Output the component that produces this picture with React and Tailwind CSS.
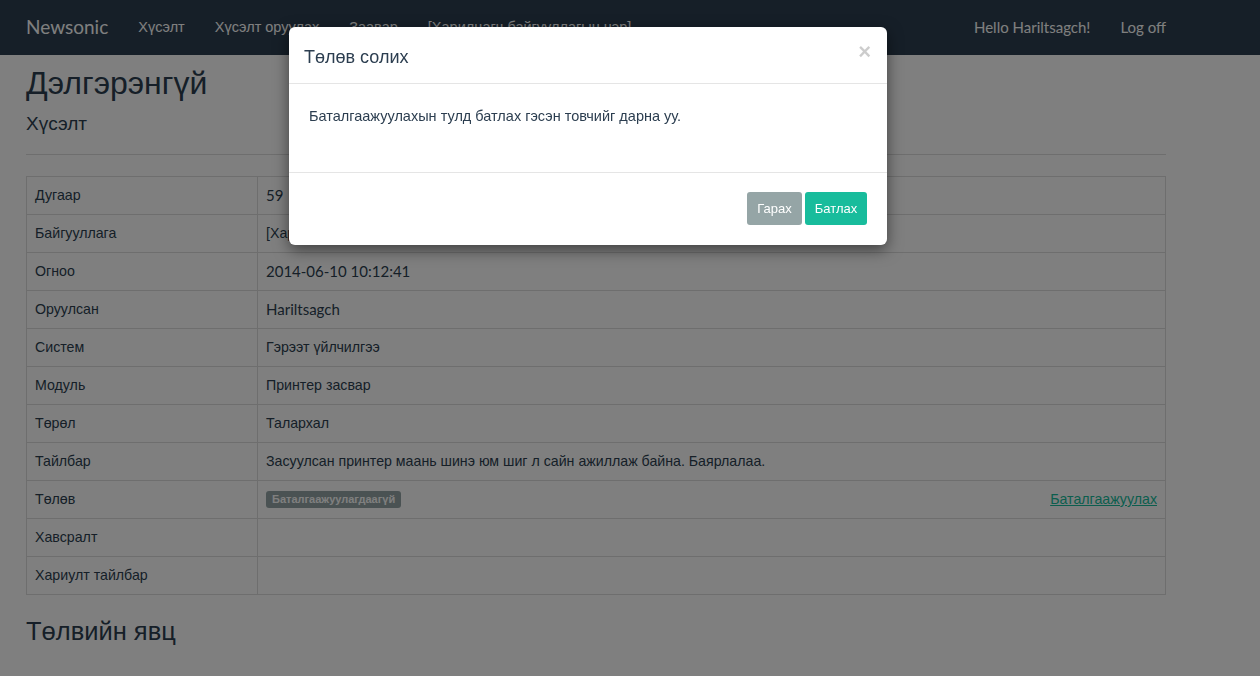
export default function App() {
  const rows = [
    ['Дугаар', '59', 'lat'],
    ['Байгууллага', '[Харилцагч байгууллагын нэр]', 'cyr'],
    ['Огноо', '2014-06-10 10:12:41', 'lat'],
    ['Оруулсан', 'Hariltsagch', 'lat'],
    ['Систем', 'Гэрээт үйлчилгээ', 'cyr'],
    ['Модуль', 'Принтер засвар', 'cyr'],
    ['Төрөл', 'Талархал', 'cyr'],
    ['Тайлбар', 'Засуулсан принтер маань шинэ юм шиг л сайн ажиллаж байна. Баярлалаа.', 'cyr'],
    ['Төлөв', null, 'status'],
    ['Хавсралт', '', 'cyr'],
    ['Хариулт тайлбар', '', 'cyr'],
  ];

  const cyr = "font-['Liberation_Sans',Arial,sans-serif]";
  const lat = "font-['Lato','Liberation_Sans',sans-serif]";

  return (
    <div className={`relative min-h-[676px] bg-white text-[#2c3e50] ${cyr}`}>
      {/* navbar */}
      <nav className="h-[55px] bg-[#2c3e50] text-white flex items-center">
        <div className="w-[1140px] ml-[26px] flex items-center">
          <span className={`${lat} text-[19px]`}>Newsonic</span>
          <div className={`flex items-center ml-[30px] gap-[30px] text-[14.5px] ${cyr}`}>
            <span>Хүсэлт</span>
            <span>Хүсэлт оруулах</span>
            <span>Заавар</span>
            <span>[Харилцагч байгууллагын нэр]</span>
          </div>
          <div className={`ml-auto flex items-center gap-[30px] text-[15px] ${lat}`}>
            <span>Hello Hariltsagch!</span>
            <span>Log off</span>
          </div>
        </div>
      </nav>

      {/* content */}
      <div className="w-[1140px] ml-[26px]">
        <h1 className="text-[32px] leading-[1.1] mt-[11px]">Дэлгэрэнгүй</h1>
        <h4 className="text-[19px] leading-[1.1] mt-[13px]">Хүсэлт</h4>
        <div className="border-t border-[#dddddd] mt-[19px]" />
        <table className="w-full mt-[21px] border-collapse border border-[#dddddd] text-[14.2px]">
          <tbody>
            {rows.map(([label, value, kind]) => (
              <tr key={label} className="h-[38px]">
                <td className={`w-[231px] border border-[#dddddd] px-[8px] ${cyr}`}>{label}</td>
                <td className={`border border-[#dddddd] px-[8px] ${kind === 'lat' ? `${lat} text-[15px]` : cyr}`}>
                  {kind === 'status' ? (
                    <div className="flex items-center justify-between">
                      <span className="bg-[#95a5a6] text-white font-bold text-[11px] leading-none px-[6px] py-[3px] rounded-[3px]">
                        Баталгаажуулагдаагүй
                      </span>
                      <a className="text-[#18bc9c] underline">Баталгаажуулах</a>
                    </div>
                  ) : (
                    value
                  )}
                </td>
              </tr>
            ))}
          </tbody>
        </table>
        <h3 className="text-[25.5px] leading-[1.1] mt-[22px]">Төлвийн явц</h3>
      </div>

      {/* backdrop */}
      <div className="fixed inset-0 bg-black/50" />

      {/* modal */}
      <div className="absolute left-[289px] top-[27px] w-[598px] bg-white rounded-[6px] shadow-[0_5px_15px_rgba(0,0,0,0.5)]">
        <div className="h-[57px] px-[15px] flex items-center justify-between border-b border-[#e5e5e5]">
          <span className="text-[18px] pt-[4px]">Төлөв солих</span>
          <span className="text-[22px] font-bold text-black/20 leading-none -mt-[7px] mr-[1px]">×</span>
        </div>
        <div className="h-[88px] px-[20px] pt-[22px] text-[14.5px]">
          Баталгаажуулахын тулд батлах гэсэн товчийг дарна уу.
        </div>
        <div className="h-[73px] border-t border-[#e5e5e5] flex justify-end items-start pt-[19px] pr-[20px] gap-[3px]">
          <button className="h-[33px] w-[55px] bg-[#95a5a6] text-white text-[13px] rounded-[3px]">Гарах</button>
          <button className="h-[33px] w-[62px] bg-[#18bc9c] text-white text-[13px] rounded-[3px]">Батлах</button>
        </div>
      </div>
    </div>
  );
}
